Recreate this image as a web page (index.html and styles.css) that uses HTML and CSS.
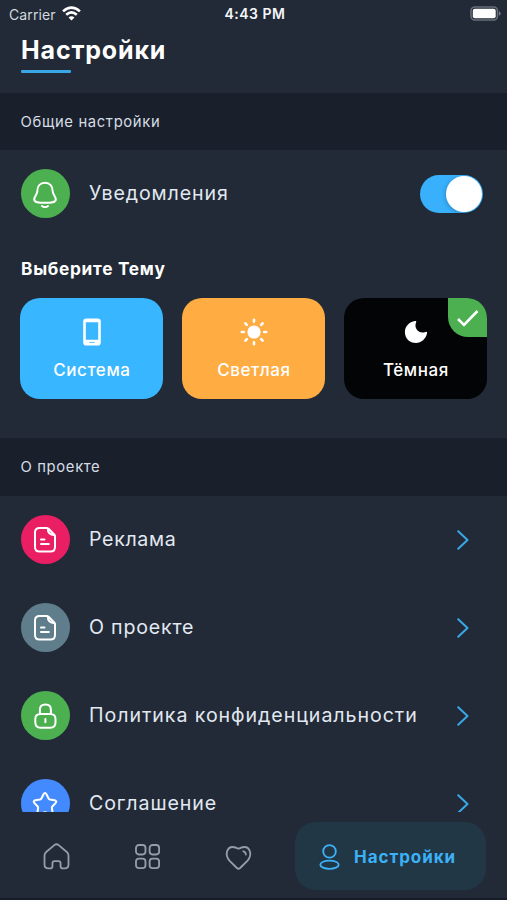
FILE: index.html
```html
<!DOCTYPE html>
<html lang="ru">
<head>
<meta charset="utf-8">
<title>Настройки</title>
<link rel="stylesheet" href="styles.css">
</head>
<body>
<svg width="0" height="0" class="defs" aria-hidden="true">
  <symbol id="doc" viewBox="0 0 28 28"><path d="M15.8 3H8.5Q4 3 4 7.5V22Q4 26.5 8.5 26.5H19.5Q24 26.5 24 22V11Q24 10.3 23.4 9.6L17.6 3.7Q16.8 3 15.8 3ZM16.8 3.3Q16.6 9.8 23.8 10.2M10 14.5H13.5M10 19H17.8"/></symbol>
  <symbol id="chevron" viewBox="0 0 12 20"><path d="M1.2 1.2L10.5 10L1.2 18.8"/></symbol>
</svg>
<div class="phone">
  <div class="statusbar">
    <div class="carrier"><span>Carrier</span>
      <svg class="wifi" viewBox="0 0 18 14"><path d="M1 5Q9-2.2 17 5M4 8.2Q9 3.8 14 8.2"/><path class="solid" d="M6.2 10.7Q9 8.4 11.8 10.7L9 13.6Z"/></svg>
    </div>
    <div class="clock">4:43 PM</div>
    <svg class="battery" viewBox="0 0 31 16"><rect class="shell" x="1" y="1" width="26.5" height="13" rx="4"/><rect class="charge" x="2.8" y="2.8" width="22.9" height="9.4" rx="2"/><path class="tip" d="M29 5.3Q30.7 6 30.7 7.5T29 9.7Z"/></svg>
  </div>
  <header class="header"><h1 class="title">Настройки</h1><div class="underline"></div></header>
  <main class="content">
    <h2 class="section general"><span>Общие настройки</span></h2>
    <div class="row notify">
      <span class="badge green"><svg class="icon" viewBox="0 0 28 28"><path d="M14 2.8C9 2.8 6.4 6.4 6.4 10.7C6.4 14.4 3.2 16.4 3.2 19.5C3.2 22.4 7.5 22.8 14 22.8S24.8 22.4 24.8 19.5C24.8 16.4 21.6 14.4 21.6 10.7C21.6 6.4 19 2.8 14 2.8ZM11 26Q14 28.3 17 26"/></svg></span>
      <span class="label l-notify">Уведомления</span>
      <span class="switch"><span class="knob"></span></span>
    </div>
    <h3 class="theme-title"><span>Выберите Тему</span></h3>
    <div class="themes">
      <div class="theme system"><svg class="theme-icon" viewBox="0 0 32 32"><path class="fill" fill-rule="evenodd" d="M10.3 2.5H21.7Q24.8 2.5 24.8 5.6V26.4Q24.8 29.5 21.7 29.5H10.3Q7.2 29.5 7.2 26.4V5.6Q7.2 2.5 10.3 2.5ZM9.8 6.3V23.7H22.2V6.3ZM13.3 26.2V27H18.7V26.2Z"/></svg><span>Система</span></div>
      <div class="theme light"><svg class="theme-icon" viewBox="0 0 32 32"><circle class="fill" cx="16" cy="16" r="6.6"/><path class="rays" d="M16 3.8V5.6M16 26.4V28.2M3.8 16H5.8M26.2 16H28.2M7.4 7.4L8.8 8.8M23.2 23.2L24.6 24.6M7.4 24.6L8.8 23.2M23.2 8.8L24.6 7.4"/></svg><span>Светлая</span></div>
      <div class="theme dark"><svg class="theme-icon" viewBox="0 0 32 32"><path class="fill" d="M15 5Q16.8 4.5 16.2 6.1C13.5 12 18.5 18.5 25.5 16Q27.6 15.3 27 17.6C25.7 23 21.5 27 16 27C9.5 27 4.9 22.4 4.9 16C4.9 10.5 9.3 5.7 15 5Z"/></svg><span>Тёмная</span>
        <span class="selected"><svg viewBox="0 0 24 20"><path d="M2 11L8 17L21.5 3"/></svg></span></div>
    </div>
    <h2 class="section about"><span>О проекте</span></h2>
    <div class="row"><span class="badge pink"><svg class="icon"><use href="#doc"/></svg></span><span class="label l-ads">Реклама</span><svg class="chevron"><use href="#chevron"/></svg></div>
    <div class="row"><span class="badge slate"><svg class="icon"><use href="#doc"/></svg></span><span class="label l-about">О проекте</span><svg class="chevron"><use href="#chevron"/></svg></div>
    <div class="row"><span class="badge green"><svg class="icon" viewBox="0 0 28 28"><path d="M8.9 13V8.7Q8.9 3.5 14.4 3.5T19.9 8.7V13M9.5 13H19.3Q24.5 13 24.5 18.2V21.3Q24.5 26.7 19.3 26.7H9.5Q4.3 26.7 4.3 21.3V18.2Q4.3 13 9.5 13ZM14.4 18V21.3"/></svg></span><span class="label l-privacy">Политика конфиденциальности</span><svg class="chevron"><use href="#chevron"/></svg></div>
    <div class="row"><span class="badge blue"><svg class="icon" viewBox="0 0 28 28"><path d="M12.4 5.5Q14 2.7 15.6 5.5L17.6 9.5Q18 10.3 19 10.5L23.7 11.3Q26.3 12 24.5 14.1L21.3 17.5Q20.8 18.1 20.9 19L21.6 23.7Q21.7 26.5 19.2 25.5L15 23.5Q14 23 13 23.5L8.8 25.5Q6.3 26.5 6.4 23.7L7.1 19Q7.2 18.1 6.7 17.5L3.5 14.1Q1.7 12 4.3 11.3L9 10.5Q10 10.3 10.4 9.5Z"/></svg></span><span class="label l-terms">Соглашение</span><svg class="chevron"><use href="#chevron"/></svg></div>
  </main>
  <nav class="tabs">
    <span class="tab"><svg class="nav-icon" viewBox="0 0 30 30"><path d="M12.8 3.2Q15 1.5 17.2 3.2L25.7 10.3Q27.4 11.8 27.4 14V23.3Q27.4 27.3 23.5 27.3H21.5Q19.2 27.3 19.2 25V22Q19.2 19.8 17 19.8H13Q10.8 19.8 10.8 22V25Q10.8 27.3 8.5 27.3H6.5Q2.6 27.3 2.6 23.3V14Q2.6 11.8 4.3 10.3Z"/></svg></span>
    <span class="tab"><svg class="nav-icon" viewBox="0 0 30 30"><rect x="3.1" y="3.1" width="9.8" height="9.8" rx="3"/><rect x="17.2" y="3.1" width="9.8" height="9.8" rx="3"/><rect x="3.1" y="17.2" width="9.8" height="9.8" rx="3"/><rect x="17.2" y="17.2" width="9.8" height="9.8" rx="3"/></svg></span>
    <span class="tab"><svg class="nav-icon" viewBox="0 0 30 30"><path d="M13.3 26.9L5.6 19.2C.3 13 3.3 5.2 8.9 5.2C11.5 5.2 13 5.9 15 7C17 5.9 18.5 5.2 21.1 5.2C26.7 5.2 29.7 13 24.4 19.2L16.7 26.9Q15 28.5 13.3 26.9ZM20 9.6Q22.6 10.2 22.6 13"/></svg></span>
    <span class="tab active"><svg class="nav-icon" viewBox="0 0 30 30"><circle cx="15" cy="9.7" r="6.5"/><ellipse cx="15" cy="23.5" rx="9.5" ry="4.3"/></svg><span class="tab-label">Настройки</span></span>
  </nav>
</div>
</body>
</html>
```
FILE: styles.css
```css
* { box-sizing: border-box; }
body { margin: 0; background: #212a36; color: #e2e8f2; font-family: Inter, "Noto Sans", sans-serif; }
svg { display: block; fill: none; stroke: currentColor; stroke-linecap: round; stroke-linejoin: round; }
.defs { position: absolute; }
h1, h2, h3 { margin: 0; }
.phone { height: 900px; display: flex; flex-direction: column; overflow: hidden; border-bottom: 2px solid #161d29; }
.statusbar { height: 28px; flex: none; display: grid; grid-template-columns: 1fr auto 1fr; align-items: center; padding: 0 6px 0 9px; color: #f4f6f9; }
.carrier { display: flex; align-items: center; gap: 6px; font-size: 14px; letter-spacing: .1px; color: #d2d8df; }
.wifi { width: 19px; height: 15px; margin-top: -2px; color: #fff; stroke-width: 2.5; stroke-linecap: butt; }
.wifi .solid { fill: #fff; stroke: none; }
.clock { font-size: 14px; font-weight: 600; letter-spacing: .5px; margin-bottom: 1px; }
.battery { width: 31px; height: 16px; justify-self: end; stroke: none; }
.battery .shell { stroke: #686f7a; stroke-width: 1.6; }
.battery .charge { fill: #fff; }
.battery .tip { fill: #777e87; }
.header { height: 65px; flex: none; padding: 6px 21px 0; }
.title { font-size: 25px; line-height: 32px; font-weight: 700; letter-spacing: .85px; color: #fff; white-space: nowrap; }
.underline { width: 50px; height: 3px; margin-top: 4px; background: #3ba6e6; border-radius: 1px; }
.content { flex: none; height: 719px; overflow: hidden; }
.section { height: 58px; padding: 0 20.5px; display: flex; align-items: center; background: #1a202b; color: #d6dce6; font-size: 14.8px; font-weight: 400; letter-spacing: .65px; }
.section.general { height: 57px; }
.row { height: 88px; padding: 0 20.5px; display: flex; align-items: center; }
.badge { width: 49px; height: 49px; flex: none; margin-bottom: 1.5px; border-radius: 50%; display: grid; place-items: center; color: #fff; }
.notify .badge { margin-bottom: 1px; }
.icon { width: 28px; height: 28px; stroke-width: 2; }
.green { background: #4caf50; }
.pink { background: #e91e63; }
.slate { background: #607d8b; }
.blue { background: #448aff; }
.label { margin-left: 19.5px; margin-bottom: 2px; font-size: 19.6px; line-height: 28px; white-space: nowrap; }
.l-notify { letter-spacing: .9px; }
.l-ads { letter-spacing: .65px; }
.l-about { letter-spacing: .8px; }
.l-privacy { letter-spacing: .94px; }
.l-terms { letter-spacing: .9px; }
.switch { width: 63px; height: 38px; margin: 0 3.5px 0 auto; border-radius: 19px; background: #38b0fc; display: flex; justify-content: flex-end; align-items: center; padding: 1px; }
.knob { width: 36px; height: 36px; border-radius: 50%; background: #fff; box-shadow: -1px 1px 4px #0003; }
.theme-title { height: 60px; padding: 17px 21px 0; font-size: 17.3px; line-height: 28px; letter-spacing: .7px; color: #fff; }
.themes { display: grid; grid-template-columns: repeat(3, 1fr); gap: 19px; padding: 0 19.6px 0 20.4px; height: 140px; align-items: start; }
.theme { height: 101px; border-radius: 20px; display: flex; flex-direction: column; align-items: center; padding-top: 18px; color: #fff; font-size: 17px; line-height: 26px; font-weight: 500; letter-spacing: .55px; position: relative; overflow: hidden; }
.theme-icon { width: 32px; height: 32px; margin-bottom: 9px; }
.fill { fill: #fff; stroke: none; }
.rays { stroke-width: 2.6; }
.system { background: #38b6ff; }
.light { background: #ffad42; }
.dark { background: #020405; }
.selected { position: absolute; top: 0; right: 0; width: 39px; height: 39px; background: #4caf50; border-radius: 0 0 0 20px; display: grid; place-items: center; }
.selected svg { width: 24px; height: 20px; stroke-width: 2.6; stroke-linecap: butt; stroke-linejoin: miter; }
.chevron { width: 12px; height: 20px; margin: 0 17.5px 0 auto; color: #38a8ea; stroke-width: 2; flex: none; }
.tabs { flex: 1; display: grid; grid-template-columns: 91px 91px 91px 191px; padding: 10px 21px 8px 11px; align-items: center; color: #949da9; }
.tab { display: grid; place-items: center; }
.nav-icon { width: 29px; height: 29px; stroke-width: 1.9; }
.tab.active { display: flex; align-items: center; height: 68px; margin-left: 11px; width: 191px; padding-left: 20px; gap: 10px; border-radius: 21px; background: #223746; color: #3bb1f6; font-size: 17px; font-weight: 700; letter-spacing: .95px; }
.tab-label { margin-top: 1px; }
```
